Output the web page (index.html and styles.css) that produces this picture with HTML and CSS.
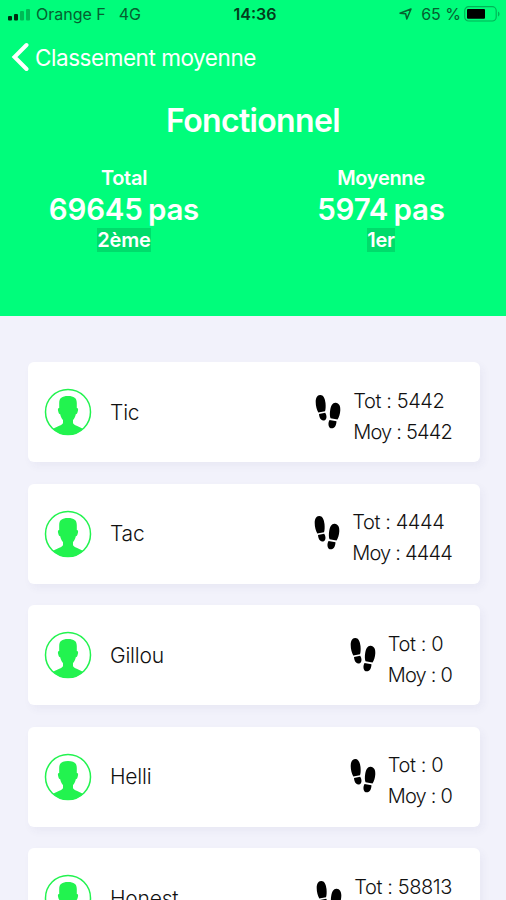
FILE: index.html
```html
<!DOCTYPE html>
<html lang="fr">
    <head>
        <meta charset="utf-8">
        <meta name="viewport" content="width=device-width, initial-scale=1">
        <title>Classement moyenne</title>
        <link rel="stylesheet" href="styles.css">
    </head>
    <body>
        <!-- icons shared by every card -->
        <svg class="symbols" width="0" height="0">
            <symbol id="avatar" viewBox="0 0 48 48">
                <circle cx="24" cy="24" r="22.5" fill="none" stroke="currentColor" stroke-width="1.5"/>
                <path fill="currentColor" d="M24 8c6 0 8.800 2 8.800 7v5c1.500 0 1.500 1.500 1 3.200-.4 1.800-1 3-2 3-.5 2.400-1.500 4.400-2.800 5.800v3c.5 2.500 6 3 10 6C34.500 45.300 29.500 47 24 47s-10.500-1.700-15-6c4-3 9.500-3.500 10-6v-3c-1.300-1.400-2.300-3.400-2.800-5.800-1 0-1.600-1.200-2-3-.5-1.700-.5-3.200 1-3.200v-5c0-5 2.800-7 8.800-7z"/>
            </symbol>
            <symbol id="steps" viewBox="0 0 26 36">
                <path d="M5 1c3.200-.3 5 3.300 5.500 8 .3 3.500.2 6.500-.5 8.200L3.300 18.500C1.800 16 .7 12 .7 8 .7 4 2.200 1.200 5 1z"/>
                <path d="M4 20l6.200-1.300c1.500 2.300 1.700 4.800.7 6.600-1 1.500-3.500 1.600-4.800.3C4.700 24.200 4.100 22 4 20z"/>
                <path d="M20.700 8.800c3.300.3 4.900 3.300 4.600 7.500-.2 4-1.300 7.200-2.800 9.300l-7-1.300c-.8-2.300-.8-5.300-.3-8.300.8-4.500 2.500-7.500 5.500-7.200z"/>
                <path d="M14.500 26l7 1.200c-.1 2.300-.7 4.500-1.800 5.800-1.300 1.500-3.900 1.700-5.200.4-1.300-1.500-1.500-4.900 0-7.400z"/>
            </symbol>
        </svg>

        <header class="header">
            <div class="status-bar">
                <div class="network">
                    <svg class="signal" width="22" height="14" viewBox="0 0 22 14">
                        <rect x="0" y="8" width="4" height="4.500" rx="1"/>
                        <rect x="6" y="6" width="4" height="6.500" rx="1"/>
                        <rect class="off" x="12" y="3" width="4" height="9.500" rx="1"/>
                        <rect class="off" x="18" y="1" width="4" height="11.500" rx="1"/>
                    </svg>
                    <span class="carrier">Orange F</span>
                    <span class="data">4G</span>
                </div>
                <span class="time">14:36</span>
                <div class="power">
                    <svg class="location" width="13" height="12" viewBox="0 0 13 12">
                        <path d="M1 5.200L12 1 7.800 11 6.700 5.800z"/>
                    </svg>
                    <span class="percent">65 %</span>
                    <svg class="battery" width="36" height="16" viewBox="0 0 36 16">
                        <rect class="shell" x=".7" y=".7" width="31.500" height="14.300" rx="4"/>
                        <rect x="3" y="3" width="18" height="9.700" rx="1"/>
                        <path class="cap" d="M34 5.500c2 .8 2 4.200 0 5z"/>
                    </svg>
                </div>
            </div>
            <a class="back" href="#">
                <svg width="18" height="30" viewBox="0 0 18 30">
                    <path d="M15.500 3L3.500 15l12 12"/>
                </svg>
                <span>Classement moyenne</span>
            </a>
            <h1>Fonctionnel</h1>
            <div class="summary">
                <div class="summary-item">
                    <span class="label">Total</span>
                    <span class="value">69645 pas</span>
                    <span class="rank">2ème</span>
                </div>
                <div class="summary-item">
                    <span class="label">Moyenne</span>
                    <span class="value">5974 pas</span>
                    <span class="rank">1er</span>
                </div>
            </div>
        </header>

        <main class="list">
            <div class="card">
                <svg class="avatar"><use href="#avatar"/></svg>
                <span class="name">Tic</span>
                <svg class="steps"><use href="#steps"/></svg>
                <div class="stats">
                    <div class="tot">Tot : 5442</div>
                    <div class="moy">Moy : 5442</div>
                </div>
            </div>
            <div class="card">
                <svg class="avatar"><use href="#avatar"/></svg>
                <span class="name">Tac</span>
                <svg class="steps"><use href="#steps"/></svg>
                <div class="stats">
                    <div class="tot">Tot : 4444</div>
                    <div class="moy">Moy : 4444</div>
                </div>
            </div>
            <div class="card">
                <svg class="avatar"><use href="#avatar"/></svg>
                <span class="name">Gillou</span>
                <svg class="steps"><use href="#steps"/></svg>
                <div class="stats">
                    <div class="tot">Tot : 0</div>
                    <div class="moy">Moy : 0</div>
                </div>
            </div>
            <div class="card">
                <svg class="avatar"><use href="#avatar"/></svg>
                <span class="name">Helli</span>
                <svg class="steps"><use href="#steps"/></svg>
                <div class="stats">
                    <div class="tot">Tot : 0</div>
                    <div class="moy">Moy : 0</div>
                </div>
            </div>
            <div class="card">
                <svg class="avatar"><use href="#avatar"/></svg>
                <span class="name">Honest</span>
                <svg class="steps"><use href="#steps"/></svg>
                <div class="stats">
                    <div class="tot">Tot : 58813</div>
                </div>
            </div>
        </main>
    </body>
</html>
```
FILE: styles.css
```css
* {
    box-sizing: border-box;
}
body {
    margin: 0;
    height: 900px;
    overflow: hidden;
    background: #f2f2fb;
    font-family: Inter, "Liberation Sans", sans-serif;
    color: #111;
}
.symbols {
    display: block;
}
.header {
    height: 316px;
    background: #00fd7b;
    color: #fff;
}
.status-bar {
    display: grid;
    grid-template-columns: 1fr auto 1fr;
    align-items: center;
    height: 28px;
    padding: 0 6px 0 8px;
    font-size: 16px;
    color: #05602f;
}
.network, .power {
    display: flex;
    align-items: center;
}
.power {
    justify-content: flex-end;
}
.signal {
    margin-top: 2px;
    fill: #002b10;
}
.signal .off {
    fill: #00b956;
}
.carrier {
    margin-left: 6px;
}
.data {
    margin-left: 13px;
}
.time {
    padding-left: 2px;
    font-weight: 600;
    color: #033d1c;
}
.location {
    margin-right: 9px;
    fill: none;
    stroke: #05602f;
    stroke-width: 1.5;
    stroke-linejoin: round;
}
.battery {
    margin-left: 3px;
    fill: #000;
}
.battery .shell {
    fill: none;
    stroke: #00b457;
    stroke-width: 1.2;
}
.battery .cap {
    fill: #00b457;
}
.back {
    display: flex;
    align-items: center;
    height: 58px;
    padding-left: 11px;
    color: #fff;
    font-size: 22.5px;
    letter-spacing: -.45px;
    text-decoration: none;
}
.back svg {
    margin-right: 6px;
    fill: none;
    stroke: #fff;
    stroke-width: 4;
    stroke-linecap: round;
}
h1 {
    margin: 15px 0 0;
    text-align: center;
    font-size: 32px;
    line-height: 40px;
    font-weight: 600;
    letter-spacing: -.65px;
}
.summary {
    display: flex;
    margin: 24px -3.500px 0 -4.500px;
}
.summary-item {
    flex: 1;
    display: flex;
    flex-direction: column;
    align-items: center;
    font-weight: 600;
}
.label {
    font-size: 20px;
    line-height: 26px;
    letter-spacing: -.3px;
}
.value {
    font-size: 29.5px;
    line-height: 36px;
    letter-spacing: -.2px;
    word-spacing: -2px;
}
.rank {
    font-size: 20px;
    line-height: 24px;
    margin-top: 1px;
    letter-spacing: -.2px;
    background: #00dc6b;
}
.list {
    display: flex;
    flex-direction: column;
    gap: 21.500px;
    height: 584px;
    padding: 46px 26px 0 28px;
    overflow: hidden;
}
.card {
    display: flex;
    flex-shrink: 0;
    align-items: center;
    height: 100px;
    padding: 0 28px 0 16px;
    background: #fff;
    border-radius: 6px;
    box-shadow: 3px 4px 8px rgba(60, 60, 110, .05);
}
.avatar {
    width: 48px;
    height: 48px;
    color: #22f34f;
}
.name {
    margin-left: 18px;
    font-size: 21px;
    font-weight: 300;
    letter-spacing: -.2px;
}
.steps {
    width: 26px;
    height: 36px;
    margin-left: auto;
    margin-top: -1px;
    fill: #000;
}
.stats {
    height: 62px;
    margin-left: 12px;
    margin-top: 9px;
    font-size: 20px;
    line-height: 31px;
    font-weight: 300;
}
.tot {
    letter-spacing: -.4px;
}
.moy {
    letter-spacing: -.8px;
}
```
